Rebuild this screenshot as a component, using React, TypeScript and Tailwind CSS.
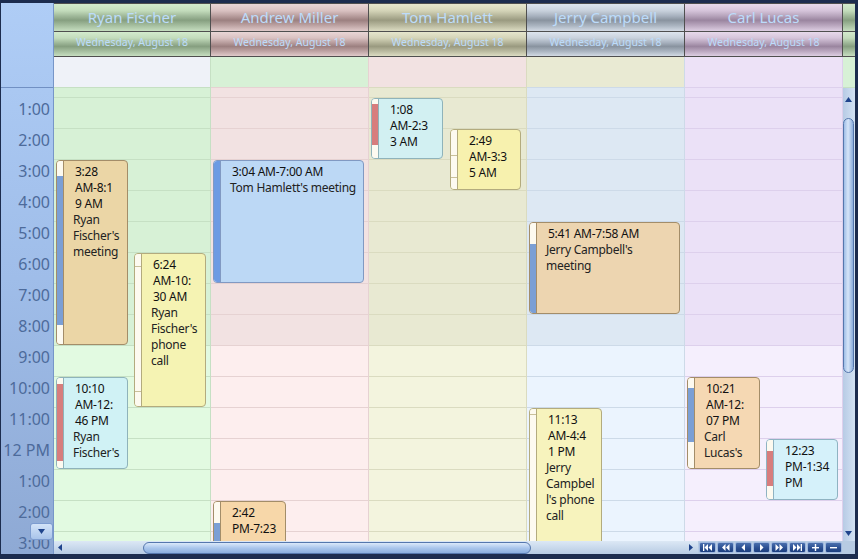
import React from "react";

type Col = {
  name: string;
  w: string;
  head: string;
  allDay: string;
  off: string;
  work: string;
  line: string;
};

type Appt = {
  col: number;
  left: number;
  top: number;
  w: number;
  h: number;
  cls: string;
  bar?: { top: number; h: number; cls: string };
  marks?: number[];
  time: string[];
  subject: string[];
};

const cols: Col[] = [
  {
    name: "Ryan Fischer",
    w: "w-[157px]",
    head: "bg-[linear-gradient(180deg,#d3ebcd_0%,#c3dcbc_25%,#9fb899_45%,#869f80_60%,#a6bfa0_80%,#c6dec0_100%)]",
    allDay: "bg-[#eff2f8]",
    off: "bg-[#d7f1d6]",
    work: "bg-[#e2fae1]",
    line: "border-[#c6e0c4]",
  },
  {
    name: "Andrew Miller",
    w: "w-[158px]",
    head: "bg-[linear-gradient(180deg,#e9d6d6_0%,#d9c1c1_25%,#b79c9c_45%,#9c8080_60%,#bea4a4_80%,#e0caca_100%)]",
    allDay: "bg-[#d7f1d6]",
    off: "bg-[#f2e2e2]",
    work: "bg-[#fdeeee]",
    line: "border-[#e6d2d2]",
  },
  {
    name: "Tom Hamlett",
    w: "w-[158px]",
    head: "bg-[linear-gradient(180deg,#e6e6cd_0%,#d4d4b8_25%,#b3b398_45%,#9a9a80_60%,#babaa0_80%,#dcdcc2_100%)]",
    allDay: "bg-[#f2e2e2]",
    off: "bg-[#e8e9d2]",
    work: "bg-[#f3f4de]",
    line: "border-[#dadbc0]",
  },
  {
    name: "Jerry Campbell",
    w: "w-[158px]",
    head: "bg-[linear-gradient(180deg,#dde5ee_0%,#c8d1dc_25%,#a6b0bd_45%,#89939f_60%,#aab4c0_80%,#d2dae4_100%)]",
    allDay: "bg-[#e9ead3]",
    off: "bg-[#dde8f3]",
    work: "bg-[#ebf4fe]",
    line: "border-[#cddae8]",
  },
  {
    name: "Carl Lucas",
    w: "w-[158px]",
    head: "bg-[linear-gradient(180deg,#e7d9eb_0%,#d5c4da_25%,#b5a2ba_45%,#9a859f_60%,#bba8c0_80%,#ddcee2_100%)]",
    allDay: "bg-[#ede2f7]",
    off: "bg-[#ebe1f7]",
    work: "bg-[#f5effd]",
    line: "border-[#ddd0ec]",
  },
];

const hours = ["1:00", "2:00", "3:00", "4:00", "5:00", "6:00", "7:00", "8:00", "9:00", "10:00", "11:00", "12 PM", "1:00", "2:00", "3:00"];

const appts: Appt[] = [
  {
    col: 0, left: 2, top: 72, w: 72, h: 185,
    cls: "bg-[#ebd6a6] border-[#a38d69]",
    bar: { top: 15, h: 149, cls: "bg-[#7b9fd5]" },
    time: ["3:28", "AM-8:1", "9 AM"],
    subject: ["Ryan", "Fischer's", "meeting"],
  },
  {
    col: 0, left: 80, top: 165, w: 72, h: 154,
    cls: "bg-[#f5f3b3] border-[#b3ab7e]",
    marks: [12, 137],
    time: ["6:24", "AM-10:", "30 AM"],
    subject: ["Ryan", "Fischer's", "phone", "call"],
  },
  {
    col: 0, left: 2, top: 289, w: 72, h: 92,
    cls: "bg-[#d0f2f5] border-[#8fb3ba]",
    bar: { top: 6, h: 77, cls: "bg-[#d77d7d]" },
    time: ["10:10", "AM-12:", "46 PM"],
    subject: ["Ryan", "Fischer's"],
  },
  {
    col: 1, left: 2, top: 72, w: 151, h: 123,
    cls: "bg-[#bcd8f5] border-[#8199c2]",
    bar: { top: 0, h: 123, cls: "bg-[#6d9be3]" },
    time: ["3:04 AM-7:00 AM"],
    subject: ["Tom Hamlett's meeting"],
  },
  {
    col: 1, left: 2, top: 413, w: 73, h: 200,
    cls: "bg-[#f7d7a9] border-[#a38d69]",
    bar: { top: 21, h: 180, cls: "bg-[#7b9fd5]" },
    time: ["2:42", "PM-7:23"],
    subject: [],
  },
  {
    col: 2, left: 2, top: 10, w: 72, h: 61,
    cls: "bg-[#d2f0f2] border-[#8fb3ba]",
    bar: { top: 5, h: 41, cls: "bg-[#d77d7d]" },
    time: ["1:08", "AM-2:3", "3 AM"],
    subject: [],
  },
  {
    col: 2, left: 81, top: 41, w: 71, h: 61,
    cls: "bg-[#f7f1ae] border-[#b3ab7e]",
    marks: [25, 47],
    time: ["2:49", "AM-3:3", "5 AM"],
    subject: [],
  },
  {
    col: 3, left: 2, top: 134, w: 151, h: 92,
    cls: "bg-[#edd5b0] border-[#a38d69]",
    bar: { top: 21, h: 71, cls: "bg-[#7b9fd5]" },
    time: ["5:41 AM-7:58 AM"],
    subject: ["Jerry Campbell's", "meeting"],
  },
  {
    col: 3, left: 2, top: 320, w: 73, h: 250,
    cls: "bg-[#f7f3bd] border-[#b3ab7e]",
    marks: [5],
    time: ["11:13", "AM-4:4", "1 PM"],
    subject: ["Jerry", "Campbel", "l's phone", "call"],
  },
  {
    col: 4, left: 2, top: 289, w: 73, h: 92,
    cls: "bg-[#f5d8b3] border-[#a38d69]",
    bar: { top: 10, h: 54, cls: "bg-[#7b9fd5]" },
    time: ["10:21", "AM-12:", "07 PM"],
    subject: ["Carl", "Lucas's"],
  },
  {
    col: 4, left: 81, top: 351, w: 72, h: 61,
    cls: "bg-[#d5f1fa] border-[#8fb3c2]",
    bar: { top: 11, h: 35, cls: "bg-[#d77d7d]" },
    time: ["12:23", "PM-1:34", "PM"],
    subject: [],
  },
];

const Appointment = ({ a }: { a: Appt }) => (
  <div
    className={`absolute rounded-[4px] border overflow-hidden text-[12px] leading-[16px] tracking-[-0.25px] ${a.cls}`}
    style={{ left: a.left, top: a.top, width: a.w, height: a.h }}
  >
    <div className="absolute left-0 top-0 bottom-0 w-[7px] bg-[#fdfaf0] border-r border-inherit">
      {a.bar && <div className={`absolute left-0 right-0 ${a.bar.cls}`} style={{ top: a.bar.top, height: a.bar.h }} />}
      {a.marks?.map((m, i) => (
        <div key={i} className="absolute left-0 right-0 h-px bg-[#c9c09a]" style={{ top: m }} />
      ))}
    </div>
    <div className="pl-[16px] pt-[3px] pr-[2px] whitespace-nowrap">
      {a.time.map((t, i) => (
        <div key={i} className="pl-[2px] text-[#111]">{t}</div>
      ))}
      {a.subject.map((s, i) => (
        <div key={i} className="text-[#222]">{s}</div>
      ))}
    </div>
  </div>
);

const Tri = ({ dir }: { dir: "l" | "r" | "u" | "d" }) => {
  const d = {
    l: "M5 0L5 7L1 3.5Z",
    r: "M1 0L1 7L5 3.5Z",
    u: "M0 5L7 5L3.5 0Z",
    d: "M0 0L7 0L3.5 5Z",
  }[dir];
  const vb = dir === "l" || dir === "r" ? "0 0 6 7" : "0 0 7 5";
  const size = dir === "l" || dir === "r" ? "w-[6px] h-[7px]" : "w-[7px] h-[5px]";
  return (
    <svg viewBox={vb} className={size}>
      <path d={d} fill="#1f448c" />
    </svg>
  );
};

const NavBtn = ({ children }: { children: React.ReactNode }) => (
  <div className="w-[17px] h-[11px] flex items-center justify-center rounded-[2px] border border-[#9db6de] bg-[linear-gradient(180deg,#4a6fae_0%,#2b4f92_55%,#1d3f80_100%)]">
    <svg viewBox="0 0 11 7" className="w-[11px] h-[7px]" fill="#ffffff">
      {children}
    </svg>
  </div>
);

export default function App() {
  return (
    <div className="w-[858px] h-[559px] bg-[#1c2c4e] pt-[3px] pl-[1px] pr-[3px] pb-[5px] font-['Noto_Sans',sans-serif] overflow-hidden">
      <div className="flex h-[551px] w-[854px]">
        {/* time ruler */}
        <div className="relative w-[53px] flex flex-col border-r border-[#7796c8] bg-[linear-gradient(180deg,#afcdf6_0%,#9fbde9_50%,#8ea9d4_100%)]">
          <div className="h-[85px] border-b border-[#7190c3] shrink-0" />
          <div className="h-[466px] overflow-hidden shrink-0">
            <div className="h-[9px]" />
            {hours.map((h, i) => (
              <div key={i} className="h-[31px] pt-[2px] pr-[3px] text-right text-[16px] leading-[20px] text-[#4d6b9b]">
                {h}
              </div>
            ))}
          </div>
          <div className="absolute left-[29px] top-[520px] w-[23px] h-[17px] rounded-[3px] border border-[#7d9cd0] bg-[linear-gradient(180deg,#d3e3f8,#a9c4ea)] flex items-center justify-center">
            <Tri dir="d" />
          </div>
        </div>

        {/* scheduler area */}
        <div className="w-[801px] flex flex-col">
          {/* resource headers */}
          <div className="flex h-[54px]">
            {cols.map((c) => (
              <div key={c.name} className={`${c.w} flex flex-col border-t border-r border-[#4f4f4f]`}>
                <div className={`h-[28px] border-b border-[#4f4f4f] flex items-center justify-center text-[15px] text-[#bcdcfb] ${c.head}`}>
                  {c.name}
                </div>
                <div className={`h-[25px] border-b border-[#4f4f4f] flex items-center justify-center pb-[2px] text-[10.5px] text-[#bcdcfb] ${c.head}`}>
                  Wednesday, August 18
                </div>
              </div>
            ))}
            <div className="w-[12px] flex flex-col border-t border-[#4f4f4f]">
              <div className="h-[28px] border-b border-[#4f4f4f] bg-[linear-gradient(180deg,#d3ebcd_0%,#c3dcbc_25%,#9fb899_45%,#869f80_60%,#a6bfa0_80%,#c6dec0_100%)]" />
              <div className="h-[25px] border-b border-[#4f4f4f] bg-[linear-gradient(180deg,#d3ebcd_0%,#c3dcbc_25%,#9fb899_45%,#869f80_60%,#a6bfa0_80%,#c6dec0_100%)]" />
            </div>
          </div>

          {/* all-day row */}
          <div className="flex h-[31px]">
            {cols.map((c) => (
              <div key={c.name} className={`${c.w} h-[31px] border-r border-b ${c.line} ${c.allDay}`} />
            ))}
            <div className="w-[12px] h-[31px] border-b border-[#c6e0c4] bg-[#d7f1d6]" />
          </div>

          {/* time slots */}
          <div className="flex h-[453px]">
            {cols.map((c, ci) => (
              <div key={c.name} className={`${c.w} relative overflow-hidden border-r ${c.line}`}>
                <div className={`h-[9px] ${c.off}`} />
                {hours.map((_, i) => (
                  <div key={i} className={`h-[31px] border-t ${c.line} ${i < 8 ? c.off : c.work}`} />
                ))}
                <div className="absolute inset-0">
                  {appts
                    .filter((a) => a.col === ci)
                    .map((a, i) => (
                      <Appointment key={i} a={a} />
                    ))}
                </div>
              </div>
            ))}
            {/* vertical scrollbar */}
            <div className="relative w-[12px] bg-[linear-gradient(90deg,#b7cbe5,#d3e2f3)]">
              <div className="absolute left-[2px] top-[9px]">
                <Tri dir="u" />
              </div>
              <div className="absolute left-0 top-[30px] w-[11px] h-[255px] rounded-full border border-[#5577ad] bg-[linear-gradient(90deg,#9ebde6_0%,#d6e5f8_45%,#8aacdc_100%)]" />
              <div className="absolute left-[2px] top-[443px]">
                <Tri dir="d" />
              </div>
            </div>
          </div>

          {/* bottom bar */}
          <div className="flex h-[13px]">
            <div className="relative w-[644px] bg-[linear-gradient(180deg,#dce8f5,#b7cbe3)]">
              <div className="absolute left-[3px] top-[3px]">
                <Tri dir="l" />
              </div>
              <div className="absolute left-[89px] top-[1px] w-[388px] h-[12px] rounded-full border border-[#5577ad] bg-[linear-gradient(180deg,#dbe9fa_0%,#aac6ec_50%,#8baedd_100%)]" />
              <div className="absolute left-[634px] top-[3px]">
                <Tri dir="r" />
              </div>
            </div>
            <div className="w-[145px] flex items-center gap-px pl-[1px] bg-[#b7cbe3]">
              <NavBtn>
                <rect x="1" y="0" width="1.3" height="7" />
                <path d="M6 0L6 7L2.5 3.5Z" />
                <path d="M10 0L10 7L6.5 3.5Z" />
              </NavBtn>
              <NavBtn>
                <path d="M5.5 0L5.5 7L2 3.5Z" />
                <path d="M9.5 0L9.5 7L6 3.5Z" />
              </NavBtn>
              <NavBtn>
                <path d="M7 0L7 7L3.5 3.5Z" />
              </NavBtn>
              <NavBtn>
                <path d="M4 0L4 7L7.5 3.5Z" />
              </NavBtn>
              <NavBtn>
                <path d="M1.5 0L1.5 7L5 3.5Z" />
                <path d="M5.5 0L5.5 7L9 3.5Z" />
              </NavBtn>
              <NavBtn>
                <path d="M1 0L1 7L4.5 3.5Z" />
                <path d="M5 0L5 7L8.5 3.5Z" />
                <rect x="8.7" y="0" width="1.3" height="7" />
              </NavBtn>
              <NavBtn>
                <rect x="2" y="3" width="7" height="1.4" />
                <rect x="4.8" y="0" width="1.4" height="7" />
              </NavBtn>
              <NavBtn>
                <rect x="2" y="3" width="7" height="1.4" />
              </NavBtn>
            </div>
            <div className="w-[12px] bg-[#b7cbe3]" />
          </div>
        </div>
      </div>
    </div>
  );
}
